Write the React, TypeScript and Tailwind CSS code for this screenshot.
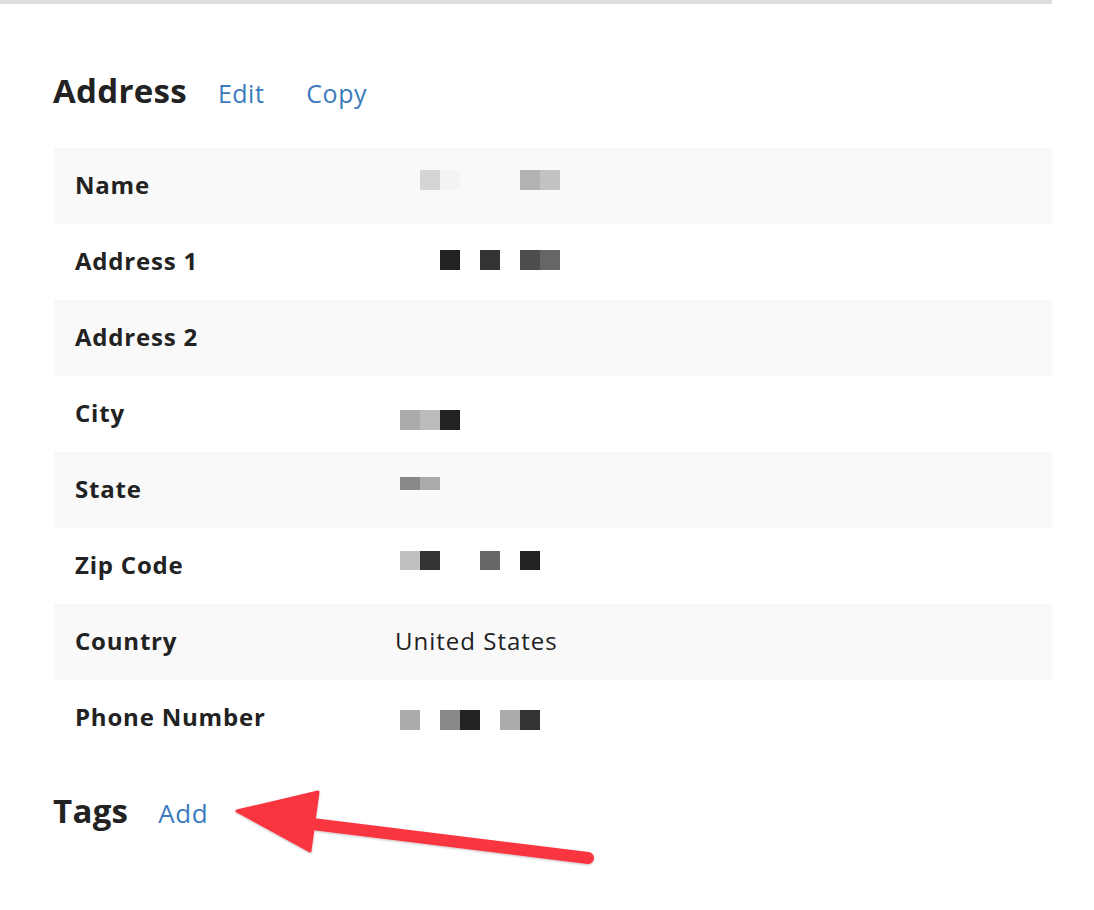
import React from 'react';

type Block = { w: number; c: string };

interface Row {
  label: string;
  value?: string;
  // pixelated (redacted) value: groups of blocks separated by gaps
  blocks?: { x: number; y: number; h: number; items: Block[] }[];
}

const rows: Row[] = [
  {
    label: 'Name',
    blocks: [
      { x: 366, y: -16, h: 20, items: [{ w: 20, c: '#d5d5d5' }, { w: 20, c: '#f3f3f3' }] },
      { x: 466, y: -16, h: 20, items: [{ w: 20, c: '#b2b2b2' }, { w: 20, c: '#c2c2c2' }] },
    ],
  },
  {
    label: 'Address 1',
    blocks: [
      { x: 386, y: -12, h: 20, items: [{ w: 20, c: '#222222' }] },
      { x: 426, y: -12, h: 20, items: [{ w: 20, c: '#333333' }] },
      { x: 466, y: -12, h: 20, items: [{ w: 20, c: '#4d4d4d' }, { w: 20, c: '#666666' }] },
    ],
  },
  { label: 'Address 2' },
  {
    label: 'City',
    blocks: [
      { x: 346, y: -4, h: 20, items: [{ w: 20, c: '#aaaaaa' }, { w: 20, c: '#bbbbbb' }, { w: 20, c: '#222222' }] },
    ],
  },
  {
    label: 'State',
    blocks: [{ x: 346, y: -13, h: 13, items: [{ w: 20, c: '#888888' }, { w: 20, c: '#aaaaaa' }] }],
  },
  {
    label: 'Zip Code',
    blocks: [
      { x: 346, y: -15, h: 19, items: [{ w: 20, c: '#c0c0c0' }, { w: 20, c: '#333333' }] },
      { x: 426, y: -15, h: 19, items: [{ w: 20, c: '#666666' }] },
      { x: 466, y: -15, h: 19, items: [{ w: 20, c: '#222222' }] },
    ],
  },
  { label: 'Country', value: 'United States' },
  {
    label: 'Phone Number',
    blocks: [
      { x: 346, y: -8, h: 20, items: [{ w: 20, c: '#aaaaaa' }] },
      { x: 386, y: -8, h: 20, items: [{ w: 20, c: '#888888' }, { w: 20, c: '#222222' }] },
      { x: 446, y: -8, h: 20, items: [{ w: 20, c: '#aaaaaa' }, { w: 20, c: '#333333' }] },
    ],
  },
];

function Redacted({ blocks }: { blocks: NonNullable<Row['blocks']> }) {
  return (
    <>
      {blocks.map((b, i) => (
        <div
          key={i}
          className="absolute flex"
          style={{ left: b.x, top: `calc(50% + ${b.y}px)`, height: b.h }}
        >
          {b.items.map((it, j) => (
            <div key={j} style={{ width: it.w, height: b.h, backgroundColor: it.c }} />
          ))}
        </div>
      ))}
    </>
  );
}

function Arrow() {
  return (
    <svg
      className="absolute left-0 top-0 pointer-events-none"
      width="1094"
      height="910"
      viewBox="0 0 1094 910"
    >
      <defs>
        <filter id="sh" x="-10%" y="-10%" width="120%" height="140%">
          <feDropShadow dx="0" dy="1" stdDeviation="1.2" floodColor="#000" floodOpacity="0.25" />
        </filter>
      </defs>
      <g filter="url(#sh)" fill="#f93440" stroke="#f93440" strokeLinejoin="round">
        <line x1="296" y1="822" x2="588" y2="858" strokeWidth="12" strokeLinecap="round" />
        <polygon points="237,811 318,792 310,851" strokeWidth="3" />
      </g>
    </svg>
  );
}

export default function App() {
  return (
    <div
      className="relative w-[1094px] h-[910px] bg-white text-[#222]"
      style={{ fontFamily: '"Open Sans", Arial, sans-serif' }}
    >
      <div className="w-[1052px] h-[4px] bg-[#dddddd]" />

      <div className="pl-[53px] w-[1052px]">
        {/* Address header */}
        <div className="flex items-baseline mt-[70px] h-[40px]">
          <h2 className="text-[33px] font-bold tracking-[0.3px] leading-none">Address</h2>
          <a className="ml-[31px] text-[25px] tracking-[0.5px] text-[#3b7bbd] leading-none">Edit</a>
          <a className="ml-[42px] text-[25px] tracking-[0.5px] text-[#3b7bbd] leading-none">Copy</a>
        </div>

        {/* Address table */}
        <div className="mt-[34px] ml-px">
          {rows.map((r, i) => (
            <div
              key={r.label}
              className={`relative flex items-center h-[76px] pl-[21px] pb-[3px] ${i % 2 === 0 ? 'bg-[#f9f9f9]' : 'bg-white'}`}
            >
              <span className="w-[320px] text-[24px] font-bold tracking-[0.8px]">{r.label}</span>
              {r.value && <span className="text-[24px] tracking-[1px] text-[#222]">{r.value}</span>}
              {r.blocks && <Redacted blocks={r.blocks} />}
            </div>
          ))}
        </div>

        {/* Tags */}
        <div className="flex items-baseline mt-[38px]">
          <h2 className="text-[33px] font-bold tracking-[0.3px] leading-none">Tags</h2>
          <a className="ml-[30px] text-[26px] tracking-[0.5px] text-[#3b7bbd] leading-none">Add</a>
        </div>
      </div>

      <Arrow />
    </div>
  );
}
